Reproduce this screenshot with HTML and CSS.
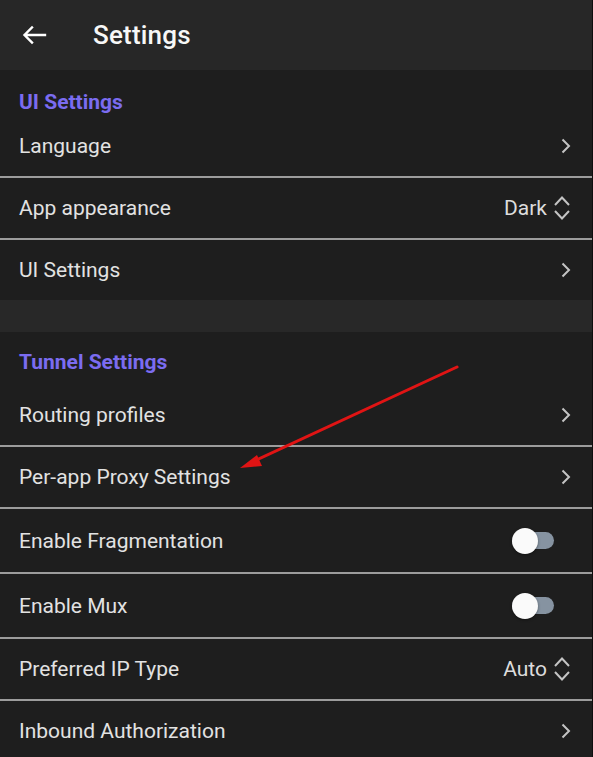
FILE: index.html
```html
<!DOCTYPE html>
<html lang="en">
<head>
    <meta charset="UTF-8">
    <meta name="viewport" content="width=device-width, initial-scale=1.0">
    <title>Settings</title>
    <link rel="stylesheet" href="styles.css">
</head>
<body>
    <div class="page">
        <header class="topbar">
            <svg class="back" width="26" height="20" viewBox="0 0 26 20">
                <path d="M24 10H4 M11 2.5 L3.5 10 L11 17.5" fill="none" stroke="#ffffff" stroke-width="2.4" stroke-linecap="square"/>
            </svg>
            <h1>Settings</h1>
        </header>

        <!-- UI settings -->
        <section class="group">
            <h2 class="group-title first">UI Settings</h2>
            <div class="row">
                <span>Language</span>
                <svg class="chev" width="10" height="16" viewBox="0 0 10 16"><path d="M1.5 1.5 L8 8 L1.5 14.5" /></svg>
            </div>
            <div class="row">
                <span>App appearance</span>
                <span class="value">Dark
                    <svg class="updown" width="18" height="26" viewBox="0 0 18 26"><path d="M2 10 L9 2.5 L16 10 M2 16 L9 23.5 L16 16" /></svg>
                </span>
            </div>
            <div class="row last">
                <span>UI Settings</span>
                <svg class="chev" width="10" height="16" viewBox="0 0 10 16"><path d="M1.5 1.5 L8 8 L1.5 14.5" /></svg>
            </div>
        </section>

        <div class="band"></div>

        <!-- Tunnel settings -->
        <section class="group">
            <h2 class="group-title second">Tunnel Settings</h2>
            <div class="row">
                <span>Routing profiles</span>
                <svg class="chev" width="10" height="16" viewBox="0 0 10 16"><path d="M1.5 1.5 L8 8 L1.5 14.5" /></svg>
            </div>
            <div class="row">
                <span>Per-app Proxy Settings</span>
                <svg class="chev" width="10" height="16" viewBox="0 0 10 16"><path d="M1.5 1.5 L8 8 L1.5 14.5" /></svg>
            </div>
            <div class="row tall">
                <span>Enable Fragmentation</span>
                <span class="switch"><span class="thumb"></span></span>
            </div>
            <div class="row tall">
                <span>Enable Mux</span>
                <span class="switch"><span class="thumb"></span></span>
            </div>
            <div class="row">
                <span>Preferred IP Type</span>
                <span class="value">Auto
                    <svg class="updown" width="18" height="26" viewBox="0 0 18 26"><path d="M2 10 L9 2.5 L16 10 M2 16 L9 23.5 L16 16" /></svg>
                </span>
            </div>
            <div class="row last">
                <span>Inbound Authorization</span>
                <svg class="chev" width="10" height="16" viewBox="0 0 10 16"><path d="M1.5 1.5 L8 8 L1.5 14.5" /></svg>
            </div>
        </section>

        <!-- red annotation arrow -->
        <svg class="pointer" width="593" height="757" viewBox="0 0 593 757">
            <line x1="457" y1="367" x2="252" y2="462" stroke="#e01414" stroke-width="3" stroke-linecap="round"/>
            <polygon points="240,468 257,455 262,466" fill="#e01414"/>
        </svg>
    </div>
</body>
</html>
```

FILE: styles.css
```css
body {
    margin: 0;
    background-color: #1e1e1e;
    color: #e2e2e2;
    font-family: Roboto, "Noto Sans", sans-serif;
}
.page {
    position: relative;
    width: 592px;
    height: 757px;
    overflow: hidden;
    border-right: 1px solid #0e0e0e;
}
.topbar {
    display: flex;
    align-items: center;
    height: 70px;
    padding-left: 21px;
    background-color: #272727;
    box-sizing: border-box;
}
.back {
    display: block;
    margin-right: 46px;
}
h1 {
    margin: 0;
    font-size: 26px;
    font-weight: 500;
    color: #f7f7f7;
    letter-spacing: 0.2px;
}
.group-title {
    margin: 0;
    padding: 0 19px;
    font-size: 21px;
    line-height: 24px;
    font-weight: 700;
    color: #7b6cf0;
}
.group-title.first {
    padding-top: 20px;
    padding-bottom: 2px;
}
.group-title.second {
    padding-top: 18px;
    padding-bottom: 11px;
}
.row {
    display: flex;
    align-items: center;
    justify-content: space-between;
    height: 60px;
    padding: 0 21px 0 19px;
    font-size: 21px;
    border-bottom: 2px solid #9c9c9c;
}
.row.tall {
    height: 63px;
}
.row.last {
    border-bottom: none;
}
.chev path, .updown path {
    fill: none;
    stroke: #c4c4c4;
    stroke-width: 2;
}
.value {
    display: flex;
    align-items: center;
    gap: 6px;
    color: #dcdcdc;
}
.band {
    height: 32px;
    background-color: #282828;
}
.switch {
    position: relative;
    width: 42px;
    height: 17px;
    margin-right: 17px;
    border-radius: 9px;
    background-color: #8693a1;
}
.thumb {
    position: absolute;
    left: 0;
    top: -4.5px;
    width: 26px;
    height: 26px;
    border-radius: 50%;
    background-color: #fafafa;
    box-shadow: 0 1px 3px rgba(0, 0, 0, 0.4);
}
.pointer {
    position: absolute;
    top: 0;
    left: 0;
    pointer-events: none;
}
```
